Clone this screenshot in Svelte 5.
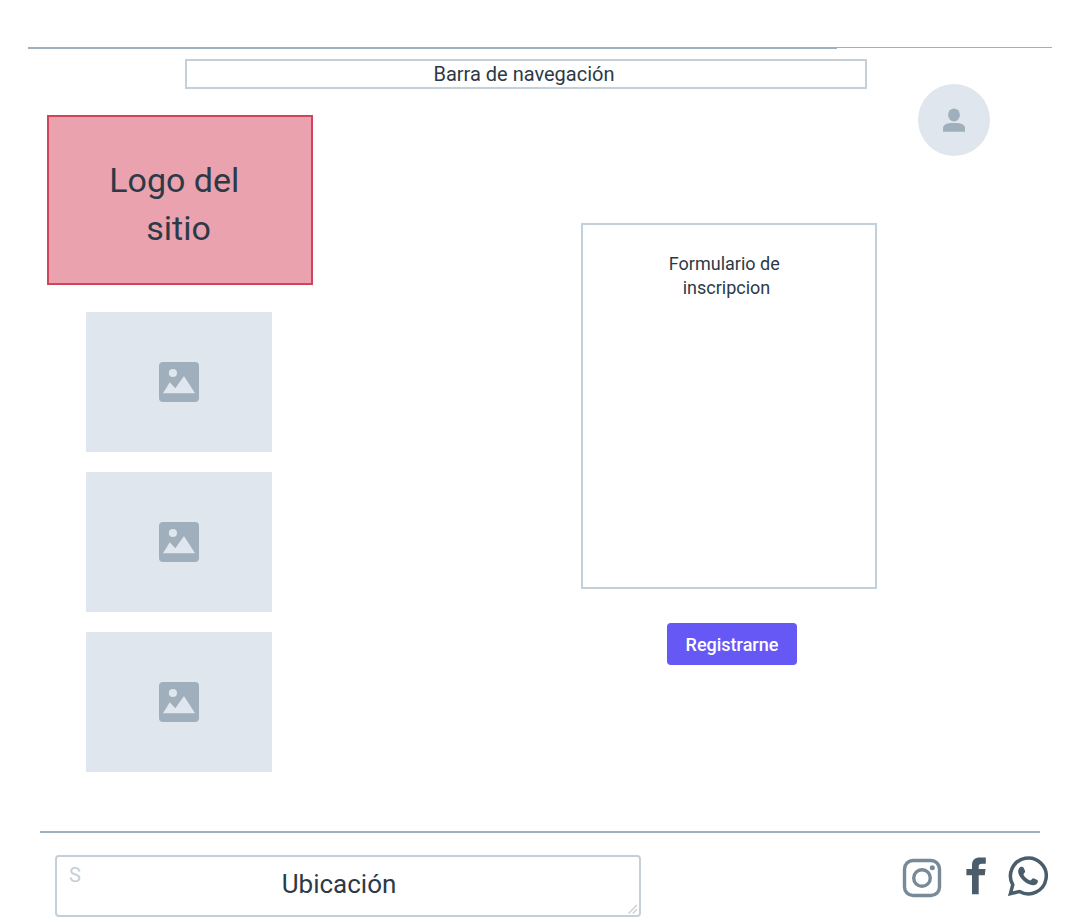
<script>
  const pictures = ['Imagen 1', 'Imagen 2', 'Imagen 3'];
  const logoText = 'Logo del \nsitio';
  const formText = 'Formulario de \ninscripcion';
</script>

<div class="page">
  <div class="progress" role="presentation"><div class="progress-fill"></div></div>

  <header>
    <nav>Barra de navegación</nav>
    <button class="avatar" aria-label="Perfil">
      <svg width="24" height="26" viewBox="0 0 24 26" fill="#9fafbb">
        <ellipse cx="12" cy="7.9" rx="5.9" ry="6.5" />
        <path d="M1 24.8V21.5C1 17.8 4 16 12 16s11 1.8 11 5.500v3.300z" />
      </svg>
    </button>
  </header>

  <main>
    <section class="side">
      <h1 class="logo">{logoText}</h1>
      <div class="gallery">
        {#each pictures as name}
          <div class="picture" role="img" aria-label={name}>
            <svg width="40" height="40" viewBox="0 0 40 40">
              <rect width="40" height="40" rx="4" fill="#9fafbb" />
              <circle cx="13.900" cy="11" r="4.100" fill="#dfe6ee" />
              <path d="M4 31.300L10.700 20.200L16.300 26.300L25 14.100L36 31.300z" fill="#dfe6ee" />
            </svg>
          </div>
        {/each}
      </div>
    </section>

    <section class="signup">
      <h2 class="form-box">{formText}</h2>
      <button class="register">Registrarne</button>
    </section>
  </main>

  <hr />

  <footer>
    <div class="location">
      <textarea id="location" placeholder="S"></textarea>
      <label for="location">Ubicación</label>
      <svg class="grip" width="10" height="10" viewBox="0 0 10 10" fill="none" stroke="#c3cfd9" stroke-width="1.300">
        <path d="M.5 9.500L9 1M4.800 9.500L9 5.200" />
      </svg>
    </div>
    <div class="social">
      <a href="#instagram" aria-label="Instagram">
        <svg width="42" height="42" viewBox="0 0 42 42" fill="none" stroke="#788997">
          <rect x="2.500" y="4.500" width="35" height="35" rx="8.500" stroke-width="3.400" />
          <circle cx="20" cy="22" r="8.300" stroke-width="3.400" />
          <circle cx="30.300" cy="11.700" r="2.500" fill="#788997" stroke="none" />
        </svg>
      </a>
      <a href="#facebook" aria-label="Facebook">
        <svg width="20" height="40" viewBox="0 0 20 40" fill="#4b5d6b">
          <path d="M6 38.200V19.200H.4V13H6V9.500C6 4 8.800 1.600 14 1.600H19.800V7.800H16C13.500 7.800 12.700 8.800 12.700 10.800V13H19.500L18.800 19.200H12.700V38.200z" />
        </svg>
      </a>
      <a href="#whatsapp" aria-label="WhatsApp">
        <svg width="40" height="40" viewBox="0 0 40 40">
          <path fill="none" stroke="#4b5d6b" stroke-width="3.500" d="M2.400 37.600L4.800 28.800A17.900 17.900 0 1 1 11.500 35.500z" />
          <path fill="#4b5d6b" d="M12.300 11.100C13.300 10.500 14.900 10.500 15.500 11.500L17.100 15.100C17.500 16.300 15.700 17.700 15.400 18.600C16.500 21.200 19.300 23.600 22.300 24.500C23.500 24 24.400 22 25.500 22.300L29.400 24.100C30.500 24.900 29.700 27.300 28.500 28.200C26.800 29.500 24.200 29.600 21.800 28.600C16.500 26.500 12.500 22.600 10.600 18C9.600 15.200 10.300 12.400 12.300 11.100z" />
        </svg>
      </a>
    </div>
  </footer>
</div>

<style>
  :global(body) {
    margin: 0;
    background: #fff;
  }
  .page {
    box-sizing: border-box;
    padding-top: 47px;
    font-family: Roboto, "Liberation Sans", sans-serif;
    color: #2c3a47;
  }
  .page * {
    box-sizing: border-box;
  }
  svg {
    display: block;
  }
  button {
    border: 0;
    padding: 0;
    font-family: inherit;
    cursor: pointer;
  }
  .progress {
    margin: 0 28px;
    height: 2px;
    border-top: 1px solid #9fafbb;
  }
  .progress-fill {
    width: 79%;
    height: 1px;
    background: #9fafbb;
  }
  header {
    display: flex;
    align-items: flex-start;
    gap: 51px;
    height: 66px;
    padding: 10px 90px 0 185px;
  }
  nav {
    flex: 1;
    height: 30px;
    border: 2px solid #c3cfd9;
    padding-right: 4px;
    font-size: 20px;
    line-height: 26px;
    text-align: center;
  }
  .avatar {
    display: grid;
    place-items: center;
    flex: none;
    width: 72px;
    height: 72px;
    margin-top: 25px;
    border-radius: 50%;
    background: #dfe6ee;
  }
  main {
    display: flex;
    justify-content: space-between;
    padding: 0 203px 0 47px;
  }
  .side {
    width: 266px;
  }
  h1,
  h2 {
    margin: 0;
    font-weight: 400;
    text-align: center;
    white-space: pre;
  }
  .logo {
    height: 170px;
    padding: 39px 3px 39px 0;
    border: 2px solid #d0455c;
    background: #e9a2ae;
    font-size: 34px;
    line-height: 48px;
  }
  .gallery {
    display: flex;
    flex-direction: column;
    gap: 20px;
    padding: 27px 41px 0 39px;
  }
  .picture {
    display: grid;
    place-items: center;
    height: 140px;
    background: #dfe6ee;
  }
  .signup {
    width: 296px;
    padding-top: 108px;
  }
  .form-box {
    height: 366px;
    padding: 27px 5px 0 0;
    border: 2px solid #c3cfd9;
    font-size: 18px;
    line-height: 24px;
  }
  .register {
    display: block;
    width: 130px;
    height: 42px;
    margin: 34px 0 0 86px;
    border-radius: 4px;
    background: #6658f5;
    color: #fff;
    font-size: 18px;
    font-weight: 500;
  }
  hr {
    height: 2px;
    margin: 59px 40px 0;
    border: 0;
    background: #9fafbb;
  }
  footer {
    display: flex;
    justify-content: space-between;
    align-items: flex-start;
    padding: 22px 32px 7px 55px;
  }
  .location {
    position: relative;
    flex: 0 1 586px;
    height: 62px;
  }
  textarea {
    display: block;
    width: 100%;
    height: 100%;
    padding: 6px 12px;
    border: 2px solid #c3cfd9;
    border-radius: 4px;
    background: #fff;
    color: #2c3a47;
    font: 20px/24px Roboto, "Liberation Sans", sans-serif;
    resize: none;
  }
  textarea::placeholder {
    color: #c3cfd9;
    opacity: 1;
  }
  label {
    position: absolute;
    inset: 0;
    padding-right: 18px;
    font-size: 26px;
    line-height: 58px;
    text-align: center;
    pointer-events: none;
  }
  .grip {
    position: absolute;
    right: 3px;
    bottom: 3px;
    pointer-events: none;
  }
  .social {
    display: flex;
    gap: 22px;
    padding-top: 1px;
  }
</style>
